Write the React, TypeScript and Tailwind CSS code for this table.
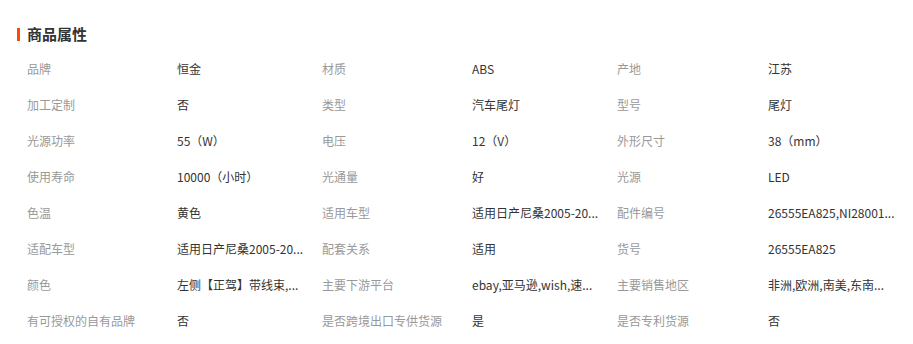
import React from "react";

const rows: [string, string, string, string, string, string][] = [
  ["品牌", "恒金", "材质", "ABS", "产地", "江苏"],
  ["加工定制", "否", "类型", "汽车尾灯", "型号", "尾灯"],
  ["光源功率", "55（W）", "电压", "12（V）", "外形尺寸", "38（mm）"],
  ["使用寿命", "10000（小时）", "光通量", "好", "光源", "LED"],
  ["色温", "黄色", "适用车型", "适用日产尼桑2005-20...", "配件编号", "26555EA825,NI28001..."],
  ["适配车型", "适用日产尼桑2005-20...", "配套关系", "适用", "货号", "26555EA825"],
  ["颜色", "左侧【正驾】带线束,...", "主要下游平台", "ebay,亚马逊,wish,速...", "主要销售地区", "非洲,欧洲,南美,东南..."],
  ["有可授权的自有品牌", "否", "是否跨境出口专供货源", "是", "是否专利货源", "否"],
];

function Label({ t }: { t: string }) {
  return <div className="text-[12px] text-[#999999] whitespace-nowrap">{t}</div>;
}
function Value({ t }: { t: string }) {
  return <div className="text-[12px] text-[#333333] whitespace-nowrap">{t}</div>;
}

export default function App() {
  return (
    <div
      className="w-[913px] h-[344px] bg-white pt-[24px] overflow-hidden"
      style={{ fontFamily: '"Noto Sans CJK SC", "Noto Sans", sans-serif' }}
    >
      <div className="flex items-center h-[20px] pl-[17px]">
        <div className="w-[3px] h-[13px] bg-[#ff4a00]" />
        <div className="ml-[7px] text-[15px] font-bold text-[#333333] leading-[20px]">商品属性</div>
      </div>
      <div className="mt-[7px] pl-[27px]">
        {rows.map((r, i) => (
          <div key={i} className="grid grid-cols-[150px_145px_150px_145px_151px_1fr] h-[36px] items-center">
            <Label t={r[0]} />
            <Value t={r[1]} />
            <Label t={r[2]} />
            <Value t={r[3]} />
            <Label t={r[4]} />
            <Value t={r[5]} />
          </div>
        ))}
      </div>
    </div>
  );
}
